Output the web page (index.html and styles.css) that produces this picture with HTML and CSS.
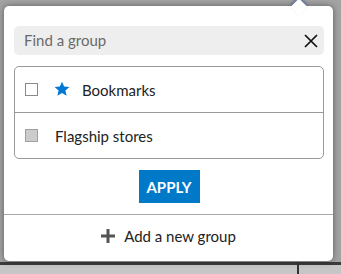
FILE: index.html
```html
<!DOCTYPE html>
<html lang="en">
<head>
    <meta charset="UTF-8">
    <title>Groups</title>
    <link rel="stylesheet" href="styles.css">
</head>
<body>

<div class="popover">
    <div class="popover-arrow"></div>

    <div class="search">
        <input type="text" class="search-input" placeholder="Find a group">
        <button class="search-clear" aria-label="Clear">
            <svg width="14" height="14" viewBox="0 0 14 14">
                <path d="M1 1 L13 13 M13 1 L1 13" stroke="#111" stroke-width="1.7" fill="none"/>
            </svg>
        </button>
    </div>

    <ul class="group-list">
        <li class="group-row">
            <span class="check"></span>
            <svg class="star" width="16" height="16" viewBox="0 0 24 24">
                <path d="M12 1l3.2 7.3 7.9.7-6 5.2 1.8 7.8L12 17.9 5.1 22l1.8-7.8-6-5.2 7.9-.7z" fill="#0078d4"/>
            </svg>
            <span class="group-name">Bookmarks</span>
        </li>
        <li class="group-row">
            <span class="check check-disabled"></span>
            <span class="group-name">Flagship stores</span>
        </li>
    </ul>

    <div class="actions">
        <button class="apply-button">APPLY</button>
    </div>

    <div class="footer">
        <svg width="14" height="14" viewBox="0 0 14 14">
            <path d="M7 0 V14 M0 7 H14" stroke="#555" stroke-width="3" fill="none"/>
        </svg>
        <span>Add a new group</span>
    </div>
</div>

</body>
</html>
```

FILE: styles.css
```css
body {
    margin: 0;
    width: 341px;
    height: 274px;
    overflow: hidden;
    font-family: 'Lato', 'Open Sans', sans-serif;
    color: #222;
    /* the page behind the popover */
    background:
        linear-gradient(to right, transparent 297px, #333 297px, #333 299px, transparent 299px) 0 263px / 100% 11px no-repeat,
        linear-gradient(to bottom, #a3a3a3 0, #a3a3a3 262px, #3c3c3c 262px, #3c3c3c 265px, #c6c6c6 265px);
    padding: 6px 0 0 4px;
    box-sizing: border-box;
}

.popover {
    position: relative;
    width: 329px;
    height: 255px;
    background-color: #ffffff;
    border-radius: 5px;
    box-shadow: 0 0 6px rgba(0, 0, 0, 0.45);
    display: flex;
    flex-direction: column;
    padding: 20px 9px 0 10px;
    box-sizing: border-box;
}

.popover-arrow {
    position: absolute;
    top: -5px;
    left: 289px;
    width: 12px;
    height: 12px;
    background-color: #ffffff;
    transform: rotate(45deg);
    box-shadow: -2px -2px 3px rgba(60, 90, 150, 0.6);
}

.search {
    display: flex;
    align-items: center;
    height: 29px;
    background-color: #eeeeee;
    border-radius: 5px;
    padding: 0 6px 0 10px;
    position: relative;
    z-index: 1;
}

.search-input {
    flex: 1;
    border: none;
    background: transparent;
    font-family: inherit;
    font-size: 15px;
    color: #222;
    padding: 0 0 2px;
    outline: none;
}

.search-input::placeholder {
    color: #6a6a6a;
}

.search-clear {
    border: none;
    background: none;
    padding: 0;
    display: flex;
}

.group-list {
    list-style: none;
    margin: 11px 0 0;
    padding: 0;
    border: 1px solid #999;
    border-radius: 5px;
}

.group-row {
    display: flex;
    align-items: center;
    height: 45px;
    padding-left: 10px;
    font-size: 15px;
}

.group-row + .group-row {
    border-top: 1px solid #999;
}

.check {
    width: 11px;
    height: 11px;
    border: 1px solid #8a8a8a;
    background-color: #fff;
    margin-right: 17px;
}

.check-disabled {
    background-color: #cccccc;
    border-color: #a0a0a0;
}

.star {
    margin-left: -1px;
    margin-right: 12px;
    margin-top: -2px;
}

.actions {
    display: flex;
    justify-content: center;
    padding: 11px 0;
}

.apply-button {
    width: 61px;
    height: 33px;
    border: none;
    background-color: #0079c9;
    color: #ffffff;
    font-family: inherit;
    font-weight: 700;
    font-size: 15px;
    padding: 0;
}

.footer {
    margin: 0 -9px 0 -10px;
    border-top: 1px solid #a8a8a8;
    flex: 1;
    display: flex;
    align-items: center;
    justify-content: center;
    gap: 9px;
    font-size: 15px;
    padding-bottom: 4px;
}
```
